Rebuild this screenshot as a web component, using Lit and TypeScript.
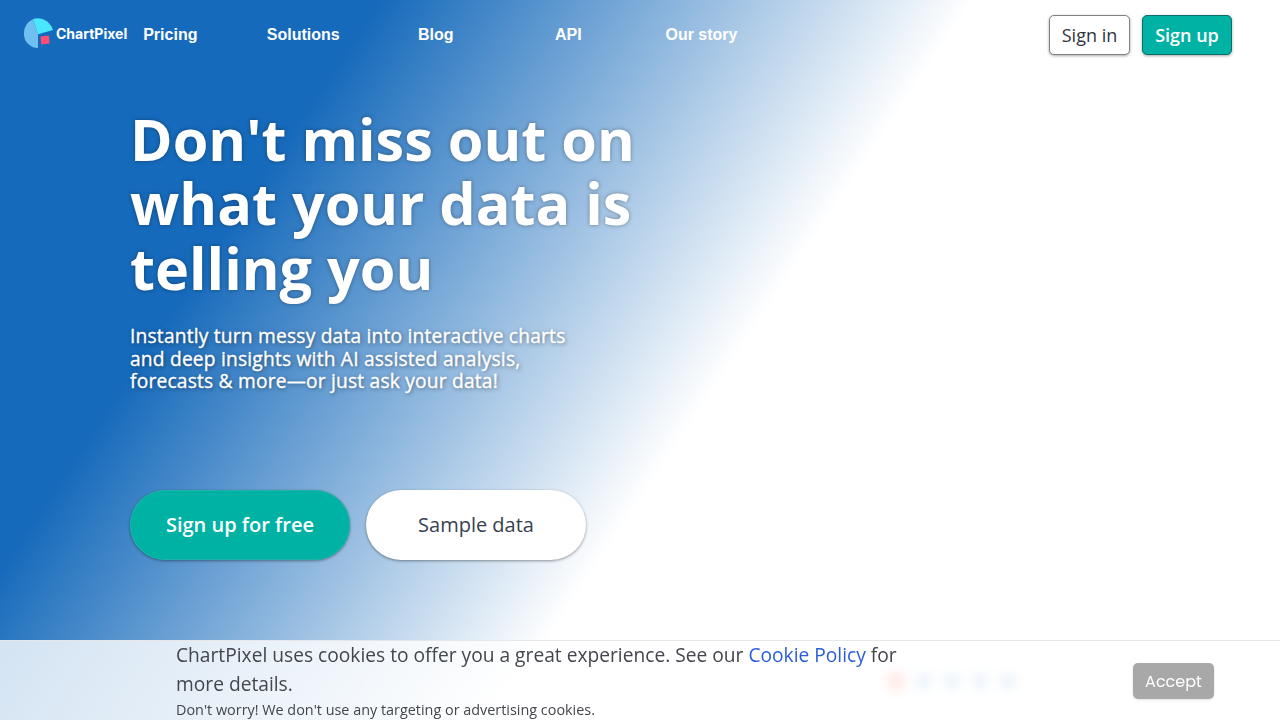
import { LitElement, html, css } from "lit";
import { customElement } from "lit/decorators.js";

@customElement("app-root")
export class AppRoot extends LitElement {
  static styles = css`
    :host {
      display: block;
      font-family: "Open Sans", sans-serif;
      color: #374151;
    }
    .page {
      position: relative;
      height: 720px;
      overflow: hidden;
      box-sizing: border-box;
      background: linear-gradient(123.7deg, #166abb 316px, #fff 810px);
    }
    .top {
      display: flex;
      align-items: center;
      height: 70px;
      padding: 0 48px 0 24px;
      box-sizing: border-box;
    }
    .brand {
      display: flex;
      align-items: center;
      width: 104px;
      color: #fff;
      font: 700 14px/20px Inter, sans-serif;
      padding-bottom: 2px;
    }
    .brand svg {
      flex: none;
      width: 30px;
      height: 32px;
      margin: -2px 2px 0 0;
    }
    .nav {
      display: flex;
      flex: 1;
      padding-left: 15.2px;
      font: 700 16px/20px "Liberation Sans", Arial, sans-serif;
      color: #fff;
    }
    .nav span:nth-child(1) { width: 123.6px; }
    .nav span:nth-child(2) { width: 151.2px; }
    .nav span:nth-child(3) { width: 137px; }
    .nav span:nth-child(4) { width: 110.5px; }
    .auth {
      display: flex;
      gap: 12px;
    }
    .btn {
      height: 40px;
      box-sizing: border-box;
      border: 1px solid #808080;
      border-radius: 5px;
      background: #fff;
      font: 400 18px/39px "Open Sans", sans-serif;
      color: #2f343c;
      text-align: center;
      width: 81px;
      box-shadow: 0 1px 3px rgba(0, 0, 0, 0.35);
    }
    .btn.primary {
      width: 90px;
      background: #00b2a3;
      color: #fff;
      font-weight: 600;
      border-color: #0b7069;
    }
    .hero {
      padding: 36.6px 0 0 130px;
      width: 520px;
    }
    h1 {
      margin: 0;
      font: 700 57.6px/64.5px "Open Sans", sans-serif;
      color: #fff;
      text-shadow: 0 0 4px rgba(0, 0, 0, 0.36);
      white-space: nowrap;
    }
    .lead {
      margin: 25.4px 0 0;
      font: 400 19.2px/22.5px "Open Sans", sans-serif;
      letter-spacing: 0.2px;
      -webkit-text-stroke: 0.35px #fff;
      color: #fff;
      text-shadow: 1px 1px 4px rgba(0, 0, 0, 0.5);
      white-space: nowrap;
    }
    .cta {
      display: flex;
      gap: 16px;
      margin-top: 97px;
    }
    .pill {
      width: 220px;
      height: 70px;
      flex: none;
      box-sizing: border-box;
      border-radius: 35px;
      font: 400 20px/70px "Open Sans", sans-serif;
      text-align: center;
      background: #fff;
      box-shadow: 0 1px 3px rgba(0, 0, 0, 0.4);
    }
    .pill.primary {
      background: #00b2a3;
      color: #fff;
      font-weight: 600;
      box-shadow: 0 1px 3px rgba(0, 0, 0, 0.4), inset 0 0 0 1px #22b1a8;
    }
    .dots {
      position: absolute;
      left: 888px;
      top: 673px;
      display: flex;
      gap: 12px;
    }
    .dot {
      width: 16px;
      height: 16px;
      border-radius: 50%;
      background: #1769ba;
      opacity: 0.45;
    }
    .dot.on {
      background: #ff4438;
      opacity: 0.75;
      box-shadow: 0 2px 8px rgba(255, 68, 56, 0.4);
    }
    .cookie {
      position: absolute;
      left: 0;
      right: 0;
      bottom: 0;
      height: 80px;
      box-sizing: border-box;
      border-top: 1px solid #e5e7eb;
      background: rgba(255, 255, 255, 0.8);
      backdrop-filter: blur(6px);
      display: flex;
      align-items: flex-start;
      padding: 0 66px 0 176px;
    }
    .notice {
      width: 740px;
      color: #43464c;
      font-size: 19.21px;
      line-height: 29px;
      margin-top: -1px;
    }
    .notice p { margin: 0; }
    .notice .small {
      font-size: 14.4px;
      line-height: 20px;
      margin-top: 2px;
    }
    .link { color: #2b5ddb; }
    .accept {
      margin: 22px 0 0 auto;
      width: 81px;
      height: 36px;
      border-radius: 5px;
      background: #a8a8a8;
      color: #fff;
      font: 400 16px/37px Poppins, "Noto Sans", sans-serif;
      text-align: center;
      box-shadow: 0 1px 3px rgba(0, 0, 0, 0.12);
    }
  `;

  render() {
    return html`
      <div class="page">
        <header class="top">
          <div class="brand">
            <svg viewBox="0 0 30 32">
              <path d="M9 2.2A15 15 0 0 0 0 16.500A14 14 0 0 0 14 31V17Z" fill="#6fbff2" />
              <path d="M9 2C17-.5 26 4 29 13L14 17.3Z" fill="#4be7ff" />
              <path d="M16.500 19.400l8.300-1 .8 8.200-8.300 1Z" fill="#ff4d73" />
            </svg>
            <span>ChartPixel</span>
          </div>
          <nav class="nav">
            <span>Pricing</span><span>Solutions</span><span>Blog</span><span>API</span><span>Our story</span>
          </nav>
          <div class="auth">
            <div class="btn">Sign in</div>
            <div class="btn primary">Sign up</div>
          </div>
        </header>
        <main class="hero">
          <h1>Don't miss out on<br />what your data is<br />telling you</h1>
          <p class="lead">Instantly turn messy data into interactive charts<br />and deep insights with AI assisted analysis,<br />forecasts &amp; more—or just ask your data!</p>
          <div class="cta">
            <div class="pill primary">Sign up for free</div>
            <div class="pill">Sample data</div>
          </div>
        </main>
        <div class="dots">
          <i class="dot on"></i><i class="dot"></i><i class="dot"></i><i class="dot"></i><i class="dot"></i>
        </div>
        <aside class="cookie">
          <div class="notice">
            <p>ChartPixel uses cookies to offer you a great experience. See our <span class="link">Cookie Policy</span> for<br />more details.</p>
            <p class="small">Don't worry! We don't use any targeting or advertising cookies.</p>
          </div>
          <div class="accept">Accept</div>
        </aside>
      </div>
    `;
  }
}
